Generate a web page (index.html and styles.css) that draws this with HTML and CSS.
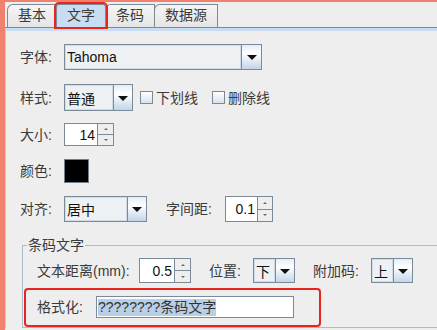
FILE: index.html
```html
<!DOCTYPE html>
<html lang="zh">
<head>
  <meta charset="UTF-8">
  <title>文字</title>
  <link rel="stylesheet" href="styles.css">
</head>
<body>
  <div class="window">
    <div class="tabbar">
      <div class="tab">基本</div>
      <div class="tab tab-active">文字</div>
      <div class="tab">条码</div>
      <div class="tab">数据源</div>
    </div>

    <div class="panel">
      <div class="row row-font">
        <span class="label">字体:</span>
        <div class="combo combo-font"><span class="combo-value">Tahoma</span><span class="combo-btn"><i class="arrow"></i></span></div>
      </div>

      <div class="row row-style">
        <span class="label">样式:</span>
        <div class="combo combo-style"><span class="combo-value">普通</span><span class="combo-btn"><i class="arrow"></i></span></div>
        <span class="check"></span><span class="check-text">下划线</span>
        <span class="check check-second"></span><span class="check-text">删除线</span>
      </div>

      <div class="row row-size">
        <span class="label">大小:</span>
        <div class="spinner spinner-size"><span class="spin-value">14</span><span class="spin-btns"><span class="spin-up"><i></i></span><span class="spin-down"><i></i></span></span></div>
      </div>

      <div class="row row-color">
        <span class="label">颜色:</span>
        <span class="swatch"></span>
      </div>

      <div class="row row-align">
        <span class="label">对齐:</span>
        <div class="combo combo-align"><span class="combo-value">居中</span><span class="combo-btn"><i class="arrow"></i></span></div>
        <span class="label label-spacing">字间距:</span>
        <div class="spinner spinner-spacing"><span class="spin-value">0.1</span><span class="spin-btns"><span class="spin-up"><i></i></span><span class="spin-down"><i></i></span></span></div>
      </div>

      <!-- 条码文字 -->
      <fieldset class="group">
        <legend>条码文字</legend>
        <div class="row grow">
          <span class="label label-distance">文本距离(mm):</span>
          <div class="spinner spinner-distance"><span class="spin-value">0.5</span><span class="spin-btns"><span class="spin-up"><i></i></span><span class="spin-down"><i></i></span></span></div>
          <span class="label label-pos">位置:</span>
          <div class="combo combo-small"><span class="combo-value">下</span><span class="combo-btn"><i class="arrow"></i></span></div>
          <span class="label label-addon">附加码:</span>
          <div class="combo combo-small"><span class="combo-value">上</span><span class="combo-btn"><i class="arrow"></i></span></div>
        </div>
        <div class="format-box">
          <div class="row">
            <span class="label label-format">格式化:</span>
            <div class="textfield"><span class="selected">????????条码文字</span></div>
          </div>
        </div>
      </fieldset>
    </div>
  </div>
</body>
</html>
```

FILE: styles.css
```css
* {
  box-sizing: border-box;
}

body {
  margin: 0;
  width: 437px;
  height: 330px;
  overflow: hidden;
  background-color: #eeeeee;
  font-family: "Liberation Sans", "Noto Sans CJK SC", sans-serif;
  font-size: 14px;
  color: #3a3a3a;
}

.window {
  height: 330px;
  border-left: 5px solid #f2806f;
  border-top: 2px solid #f2806f;
}

/* 탭 */
.tabbar {
  display: flex;
  height: 26px;
  padding: 2px 0 0 2px;
  border-bottom: 1px solid #7a8a99;
}

.tab {
  height: 23px;
  padding: 0 10px;
  margin-right: -1px;
  border: 1px solid #7a8a99;
  border-bottom: none;
  border-top-left-radius: 6px;
  background: linear-gradient(#f4f4f4, #e6e6e6);
  line-height: 21px;
}

.tab-active {
  position: relative;
  z-index: 1;
  background: #c8ddf2;
  outline: 2px solid #e8251d;
  outline-offset: 0;
  border-radius: 3px 3px 0 0;
}

.panel {
  height: 300px;
  padding: 13px 0 0 14px;
  border-top: 3px solid #c8ddf2;
  border-left: 1px solid #c4ccd4;
}

.row {
  display: flex;
  align-items: center;
}

.label {
  width: 44px;
  line-height: 16px;
  white-space: nowrap;
}

.row-font { height: 26px; margin-bottom: 14px; }
.row-style { height: 27px; margin-bottom: 12px; }
.row-size { height: 23px; margin-bottom: 13px; }
.row-color { height: 24px; margin-bottom: 13px; }
.row-align { height: 26px; }

/* 콤보박스 */
.combo {
  display: flex;
  height: 100%;
  border: 1px solid #7a8a99;
  background-color: #eef1f4;
}

.combo-value {
  flex: 1;
  padding-left: 2px;
  display: flex;
  align-items: center;
  color: #111;
  box-shadow: inset 0 0 0 1px #cfdbe7;
}

.combo-btn {
  width: 19px;
  border-left: 1px solid #7a8a99;
  background: linear-gradient(#e4edf6, #ffffff 35%, #c2d5e8);
  display: flex;
  align-items: center;
  justify-content: center;
}

.arrow {
  width: 0;
  height: 0;
  border-left: 5px solid transparent;
  border-right: 5px solid transparent;
  border-top: 5px solid #111;
  margin-top: 1px;
}

.combo-font { width: 198px; }
.combo-font .combo-btn { width: 20px; }
.combo-style { width: 69px; }
.combo-align { width: 83px; }
.combo-small { width: 42px; }

/* 체크박스 */
.check {
  width: 13px;
  height: 13px;
  margin-left: 7px;
  border: 1px solid #7a8a99;
  background: linear-gradient(#ffffff, #d6e2ee);
}

.check-second {
  margin-left: 14px;
}

.check-text {
  margin-left: 3px;
  line-height: 16px;
}

/* 스피너 */
.spinner {
  display: flex;
  height: 100%;
}

.spin-value {
  flex: 1;
  border: 1px solid #7a8a99;
  background-color: #ffffff;
  text-align: right;
  padding-right: 2px;
  display: flex;
  align-items: center;
  justify-content: flex-end;
  color: #111;
}

.spin-btns {
  width: 16px;
  display: flex;
  flex-direction: column;
  border: 1px solid #7a8a99;
  border-left: none;
}

.spin-up,
.spin-down {
  flex: 1;
  display: flex;
  align-items: center;
  justify-content: center;
  background-color: #eeeeee;
}

.spin-up {
  border-bottom: 1px solid #7a8a99;
}

.spin-up i,
.spin-down i {
  width: 0;
  height: 0;
  border-left: 2px solid transparent;
  border-right: 2px solid transparent;
}

.spin-up i { border-bottom: 2px solid #666; }
.spin-down i { border-top: 2px solid #666; }

.spinner-size { width: 50px; }
.spinner-spacing { width: 48px; }
.spinner-spacing .spin-btns { width: 15px; }
.spinner-distance { width: 52px; }

.swatch {
  width: 25px;
  height: 24px;
  border: 1px solid #6f7f8e;
  background-color: #000;
}

.label-spacing {
  width: 59px;
  margin-left: 19px;
}

/* 그룹 */
.group {
  margin: 15px -20px 0 2px;
  padding: 5px 0 0 1px;
  border: 1px solid #a9bccf;
  min-width: 0;
}

.group legend {
  margin-left: 3px;
  padding: 0 1px;
  line-height: 16px;
}

.grow {
  height: 25px;
  margin-left: 13px;
}

.label-distance { width: 102px; }
.label-pos { width: 44px; margin-left: 18px; }
.label-addon { width: 58px; margin-left: 18px; }
.label-format { width: 59px; }

.format-box {
  width: 297px;
  margin-top: 5px;
  padding: 6px 0 7px 11px;
  border: 2px solid #e8251d;
  border-radius: 4px;
}

.textfield {
  width: 198px;
  height: 22px;
  padding-left: 1px;
  border: 1px solid #7a8a99;
  background-color: #ffffff;
  display: flex;
  align-items: center;
}

.selected {
  background-color: #b8cfe5;
  line-height: 17px;
  color: #333;
}
```
